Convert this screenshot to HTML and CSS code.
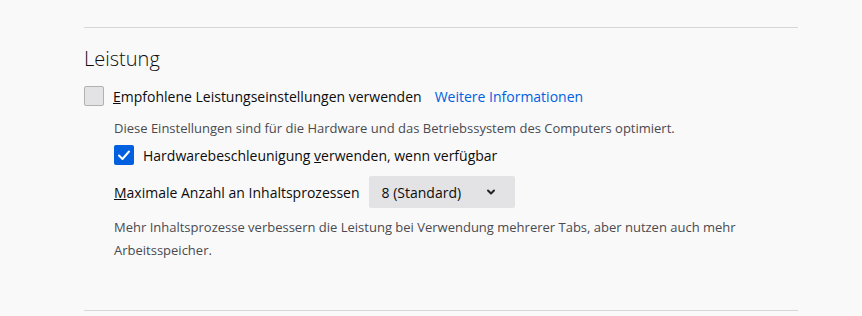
FILE: index.html
```html
<!DOCTYPE html>
<html lang="de">
<head>
<meta charset="utf-8">
<link rel="stylesheet" href="styles.css">
</head>
<body>
<div class="page">
  <hr class="sep">
  <section class="group">
    <h2 class="title">Leistung</h2>
    <div class="row row-main">
      <span class="cb"></span>
      <span class="label"><u>E</u>mpfohlene Leistungseinstellungen verwenden</span>
      <a class="link" href="#">Weitere Informationen</a>
    </div>
    <div class="sub">
      <p class="desc desc-first">Diese Einstellungen sind für die Hardware und das Betriebssystem des Computers optimiert.</p>
      <div class="row row-hw">
        <span class="cb cb-on">
          <svg viewBox="0 0 20 20" width="20" height="20"><path d="M5 10.5 L8.5 14 L15 6.5" fill="none" stroke="#fff" stroke-width="2" stroke-linecap="round" stroke-linejoin="round"/></svg>
        </span>
        <span class="label">Hardwarebeschleunigung <u>v</u>erwenden, wenn verfügbar</span>
      </div>
      <div class="row row-proc">
        <span class="label"><u>M</u>aximale Anzahl an Inhaltsprozessen</span>
        <div class="select">
          <span>8 (Standard)</span>
          <svg viewBox="0 0 12 12" width="12" height="12"><path d="M3 4.5 L6 7.5 L9 4.5" fill="none" stroke="#222" stroke-width="2" stroke-linecap="round" stroke-linejoin="round"/></svg>
        </div>
      </div>
      <p class="desc desc-last">Mehr Inhaltsprozesse verbessern die Leistung bei Verwendung mehrerer Tabs, aber nutzen auch mehr Arbeitsspeicher.</p>
    </div>
  </section>
  <hr class="sep sep-bottom">
</div>
</body>
</html>
```
FILE: styles.css
```css
html, body {
  margin: 0;
  padding: 0;
  background: #f9f9fa;
}
body {
  font-family: "Open Sans", "Noto Sans", sans-serif;
  color: #0c0c0d;
}
.page {
  width: 714px;
  margin-left: 84px;
  padding-top: 27px;
}
.sep {
  border: 0;
  border-top: 1px solid #d7d7db;
  margin: 0;
  height: 0;
}
.sep-bottom {
  margin-top: 48px;
}
.group {
  display: flex;
  flex-direction: column;
}
.title {
  font-weight: 300;
  font-size: 20px;
  line-height: 28px;
  margin: 17px 0 0 0;
}
.row {
  display: flex;
  align-items: center;
}
.row-main {
  margin-top: 13px;
  height: 20px;
}
.cb {
  width: 18px;
  height: 18px;
  border: 1px solid #b1b1b3;
  background: #e3e3e5;
  border-radius: 2px;
  flex: none;
  display: flex;
}
.cb-on {
  width: 20px;
  height: 20px;
  border: 0;
  background: #0060df;
}
.label {
  font-size: 14px;
  margin-left: 9px;
  white-space: nowrap;
}
.link {
  font-size: 14px;
  color: #0060df;
  text-decoration: none;
  margin-left: 13px;
}
.sub {
  padding-left: 30px;
  display: flex;
  flex-direction: column;
}
.desc {
  font-size: 13px;
  line-height: 23px;
  color: #4a4a4f;
  margin: 0;
}
.desc-first {
  margin-top: 11px;
}
.row-hw {
  margin-top: 5px;
  height: 20px;
}
.row-proc {
  margin-top: 11px;
}
.row-proc .label {
  margin-left: 0;
}
.select {
  margin-left: 9px;
  width: 146px;
  height: 32px;
  box-sizing: border-box;
  background: #e3e3e5;
  border-radius: 2px;
  display: flex;
  align-items: center;
  justify-content: space-between;
  padding: 0 18px 0 13px;
  font-size: 14px;
}
.desc-last {
  margin-top: 8px;
  width: 640px;
}
```
